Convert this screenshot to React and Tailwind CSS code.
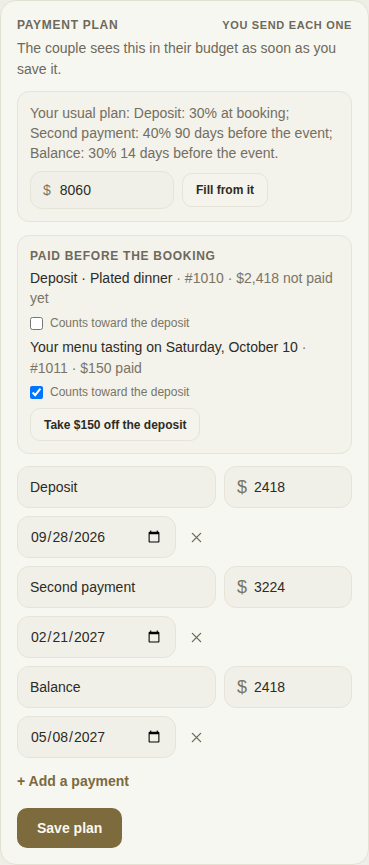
import { useState } from 'react'

const PAYMENTS = [
  { name: 'Deposit', amount: '2418', due: '2026-09-28' },
  { name: 'Second payment', amount: '3224', due: '2027-02-21' },
  { name: 'Balance', amount: '2418', due: '2027-05-08' },
]

function PaymentRow({ row }) {
  return (
    <div className="flex flex-col gap-2">
      <div className="flex gap-2">
        <input
          defaultValue={row.name}
          className="flex-1 min-w-0 h-[42px] px-3 rounded-[12px] border border-[#e6e4d8] bg-[#f1f0e8] text-[14px] text-[#2d2b26] outline-none"
        />
        <div className="w-32 h-[42px] flex items-center gap-[7px] px-3 rounded-[12px] border border-[#e6e4d8] bg-[#f1f0e8]">
          <span className="text-[18px] leading-none text-[#7a7564]">$</span>
          <input
            defaultValue={row.amount}
            className="w-full min-w-0 bg-transparent text-[14px] text-[#2d2b26] outline-none"
          />
        </div>
      </div>
      <div className="flex items-center gap-2">
        <input
          type="date"
          defaultValue={row.due}
          className="w-[159px] h-[42px] px-3 rounded-[12px] border border-[#e6e4d8] bg-[#f1f0e8] text-[14px] text-[#2d2b26] outline-none"
        />
        <button className="w-6 h-6 flex items-center justify-center text-[#6f6a5c]">
          <svg width="11" height="11" viewBox="0 0 12 12" fill="none" stroke="currentColor" strokeWidth="1.5" strokeLinecap="round">
            <path d="M1.5 1.5l9 9M10.5 1.5l-9 9" />
          </svg>
        </button>
      </div>
    </div>
  )
}

export default function App() {
  const [credit, setCredit] = useState(true)

  return (
    <div className="min-h-screen bg-[#efeee6] font-['Liberation_Sans',Arial,sans-serif]">
      <div className="rounded-[16px] border border-[#e3e1d4] bg-[#f7f7f1] px-4 pt-4 pb-4">
        <div className="flex items-center justify-between leading-4">
          <h2 className="text-[12px] font-bold tracking-[0.06em] uppercase text-[#6e695a]">Payment plan</h2>
          <span className="text-[11px] font-bold tracking-[0.06em] uppercase text-[#6e695a]">You send each one</span>
        </div>
        <p className="mt-[5px] text-[14px] leading-[21px] text-[#6e695a]">
          The couple sees this in their budget as soon as you save it.
        </p>

        <div className="mt-[11px] rounded-[12px] border border-[#e6e4d8] bg-[#f3f2eb] px-3 pt-[11px] pb-3">
          <p className="text-[14px] leading-[20px] text-[#736e5f]">
            Your usual plan: Deposit: 30% at booking; Second payment: 40% 90 days before the event; Balance: 30% 14 days before the event.
          </p>
          <div className="mt-2 flex items-center gap-2">
            <div className="w-[144px] h-[38px] flex items-center gap-[9px] px-3 rounded-[12px] border border-[#e6e4d8] bg-[#f1f0e8]">
              <span className="text-[14px] text-[#7a7564]">$</span>
              <input
                defaultValue="8060"
                className="w-full min-w-0 bg-transparent text-[14px] text-[#2d2b26] outline-none"
              />
            </div>
            <button className="h-[34px] px-[13px] rounded-[10px] border border-[#e6e4d8] bg-[#f4f3ec] text-[12px] font-bold text-[#2d2b26]">
              Fill from it
            </button>
          </div>
        </div>

        <div className="mt-[13px] rounded-[12px] border border-[#e6e4d8] bg-[#f3f2eb] p-3">
          <h3 className="text-[12px] font-bold tracking-[0.06em] uppercase text-[#6e695a] leading-4">Paid before the booking</h3>
          <p className="mt-1 text-[14px] leading-[20px] text-[#2d2b26]">
            Deposit · Plated dinner <span className="text-[#7a7564]">· #1010 · $2,418 not paid yet</span>
          </p>
          <label className="mt-[7px] flex items-center gap-[7px] text-[12px] leading-4 text-[#7a7564]">
            <input type="checkbox" className="w-[13px] h-[13px] m-0" />
            Counts toward the deposit
          </label>
          <p className="mt-[6px] text-[14px] leading-[21px] text-[#2d2b26]">
            Your menu tasting on Saturday, October 10 <span className="text-[#7a7564]">· #1011 · $150 paid</span>
          </p>
          <label className="mt-[5px] flex items-center gap-[7px] text-[12px] leading-4 text-[#7a7564]">
            <input
              type="checkbox"
              checked={credit}
              onChange={e => setCredit(e.target.checked)}
              className="w-[13px] h-[13px] m-0"
            />
            Counts toward the deposit
          </label>
          <button className="mt-2 h-[33px] px-[13px] rounded-[10px] border border-[#e6e4d8] bg-[#f4f3ec] text-[12px] font-bold text-[#2d2b26]">
            Take $150 off the deposit
          </button>
        </div>

        <div className="mt-3 flex flex-col gap-2">
          {PAYMENTS.map(p => (
            <PaymentRow key={p.name} row={p} />
          ))}
        </div>

        <button className="mt-[13px] block text-[14px] leading-5 font-bold text-[#7b6a3e]">+ Add a payment</button>

        <div className="mt-[17px]">
          <button className="h-[40px] px-5 rounded-[10px] bg-[#7d6a3d] text-[14px] font-bold text-[#fbf8ef]">
            Save plan
          </button>
        </div>
      </div>
    </div>
  )
}
